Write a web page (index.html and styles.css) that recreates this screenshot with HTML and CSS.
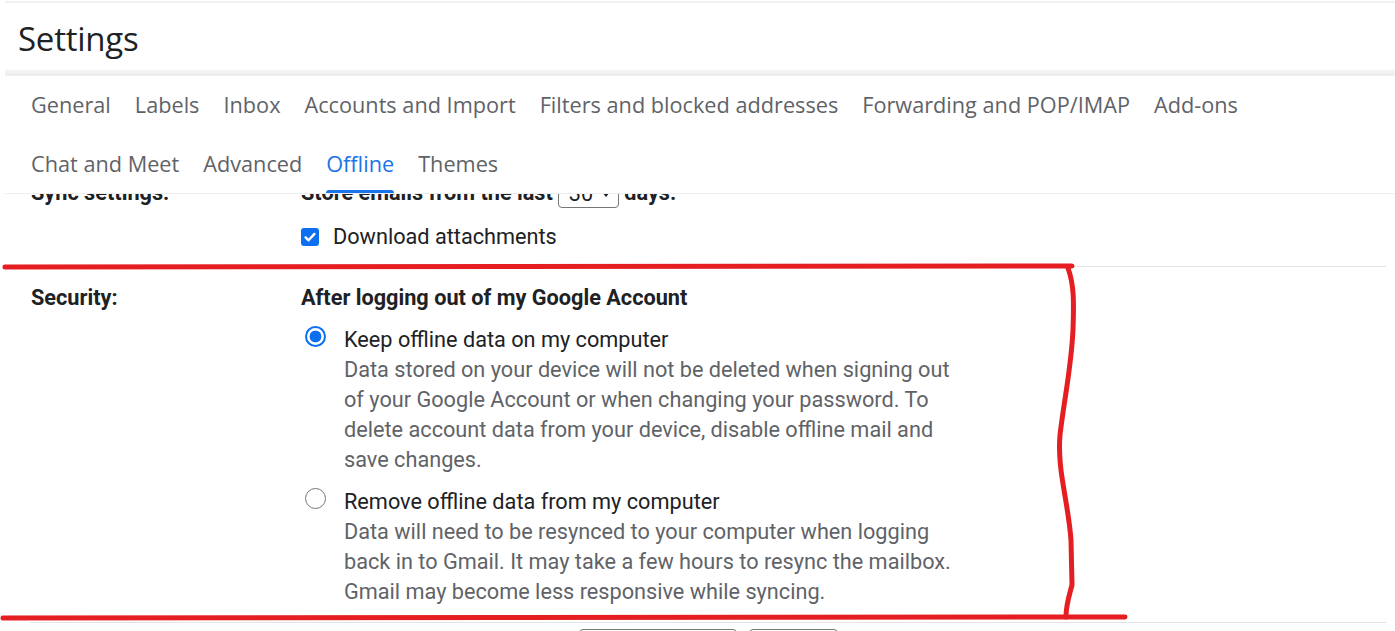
FILE: index.html
```html
<!DOCTYPE html>
<html lang="en">
<head>
<meta charset="utf-8">
<title>Settings - Offline</title>
<link rel="stylesheet" href="styles.css">
</head>
<body>
<div class="page">
  <header class="header">
    <h1 class="title">Settings</h1>
  </header>
  <nav class="tabs">
    <a class="tab">General</a>
    <a class="tab">Labels</a>
    <a class="tab">Inbox</a>
    <a class="tab">Accounts and Import</a>
    <a class="tab">Filters and blocked addresses</a>
    <a class="tab">Forwarding and POP/IMAP</a>
    <a class="tab">Add-ons</a>
    <a class="tab">Chat and Meet</a>
    <a class="tab">Advanced</a>
    <a class="tab active">Offline</a>
    <a class="tab">Themes</a>
  </nav>
  <div class="viewport">
    <div class="scroll">
      <div class="row">
        <div class="label">Sync settings:</div>
        <div class="value">
          <div class="line strong sync">
            Store emails from the last
            <span class="select">30<svg class="caret" width="8" height="5" viewBox="0 0 8 5"><path d="M0 0h8L4 5z" fill="#202124"/></svg></span>
            days.
          </div>
          <label class="check">
            <span class="box"><svg width="14" height="14" viewBox="0 0 14 14"><path d="M2.6 7.3l3 3 5.8-6.4" fill="none" stroke="#fff" stroke-width="2.4" stroke-linecap="round" stroke-linejoin="round"/></svg></span>
            Download attachments
          </label>
        </div>
      </div>
      <div class="row">
        <div class="label">Security:</div>
        <div class="value">
          <div class="line strong">After logging out of my Google Account</div>
          <div class="option">
            <span class="radio checked"></span>
            <div class="opt-text">
              <div class="opt-title">Keep offline data on my computer</div>
              <div class="opt-desc">Data stored on your device will not be deleted when signing out of your Google Account or when changing your password. To delete account data from your device, disable offline mail and save changes.</div>
            </div>
          </div>
          <div class="option">
            <span class="radio"></span>
            <div class="opt-text">
              <div class="opt-title">Remove offline data from my computer</div>
              <div class="opt-desc">Data will need to be resynced to your computer when logging back in to Gmail. It may take a few hours to resync the mailbox. Gmail may become less responsive while syncing.</div>
            </div>
          </div>
        </div>
      </div>
      <div class="actions">
        <button class="btn save">Save Changes</button>
        <button class="btn cancel">Cancel</button>
      </div>
    </div>
  </div>
  <svg class="annot" width="1395" height="631" viewBox="0 0 1395 631">
    <g fill="none" stroke="#e51e22" stroke-width="5" stroke-linecap="round" stroke-linejoin="round">
      <path d="M5 267 L1072 266"/>
      <path d="M1068 268 C1074 285 1074 300 1073 330 C1071 370 1064 400 1060 435 C1057 470 1068 500 1071 540 L1072 585 C1068 600 1066 605 1066 617"/>
      <path d="M3 618 L1125 617"/>
    </g>
  </svg>
</div>
</body>
</html>
```

FILE: styles.css
```css
html, body {
  margin: 0;
  padding: 0;
  overflow: hidden;
  background: #fff;
  width: 1395px;
  height: 631px;
}

.page {
  position: relative;
  margin: 1px 0 0 5px;
  border-top: 2px solid #eef0f2;
  font-family: Roboto, "Liberation Sans", sans-serif;
  color: #202124;
}

.header {
  height: 70px;
  display: flex;
  align-items: center;
  padding-left: 13px;
  border-bottom: 3px solid #eceef0;
  box-shadow: inset 0 -3px 0 #f3f4f5;
}

.title {
  margin: 0;
  font-family: "Open Sans", Roboto, sans-serif;
  font-weight: 400;
  font-size: 33px;
  color: #202124;
  letter-spacing: -0.25px;
}

.tabs {
  display: flex;
  flex-wrap: wrap;
  column-gap: 24px;
  row-gap: 1px;
  padding-left: 26px;
  border-bottom: 1px solid #eceef0;
}

.tab {
  position: relative;
  height: 58px;
  display: flex;
  align-items: center;
  padding-bottom: 1px;
  box-sizing: border-box;
  font-family: "Open Sans", Roboto, sans-serif;
  font-size: 21.7px;
  color: #5f6368;
  cursor: pointer;
}

.tab.active {
  color: #1a73e8;
}

.tab.active::after {
  content: "";
  position: absolute;
  left: 0;
  right: 0;
  bottom: 0;
  height: 3px;
  background: #1a73e8;
  border-radius: 3px 3px 0 0;
}

.viewport {
  height: 437px;
  overflow: hidden;
}

.scroll {
  margin-top: -31px;
  margin-left: 25px;
  width: 1356px;
  font-size: 21.7px;
  line-height: 30px;
}

.row {
  display: grid;
  grid-template-columns: 271px 1fr;
  border-bottom: 1px solid #e2e3e5;
  padding: 15px 0 14px;
}

.row + .row {
  padding: 16px 0 15px;
}

.label {
  padding-left: 1px;
  font-weight: 700;
  color: #202124;
}

.line {
  height: 30px;
}

.strong {
  font-weight: 700;
}

.sync {
  display: flex;
  align-items: center;
  gap: 5px;
}

.select {
  display: inline-flex;
  align-items: center;
  gap: 9px;
  height: 27px;
  box-sizing: border-box;
  padding: 0 8px 0 10px;
  border: 1px solid #767676;
  border-radius: 4px;
  font-weight: 400;
  margin-top: 2px;
}

.check {
  display: flex;
  align-items: center;
  margin-top: 14px;
  height: 30px;
}

.box {
  width: 18px;
  height: 18px;
  border-radius: 3px;
  background: #0b6ff0;
  display: flex;
  align-items: center;
  justify-content: center;
  margin-right: 14px;
}

.option {
  display: grid;
  grid-template-columns: 43px 1fr;
  margin-top: 12px;
}

.radio {
  width: 21px;
  height: 21px;
  box-sizing: border-box;
  margin: 1px 0 0 4px;
  border-radius: 50%;
  border: 1.5px solid #767676;
  background: #fff;
}

.radio.checked {
  border: 2px solid #0b6ff0;
  background: radial-gradient(circle, #0b6ff0 0 5.6px, #fff 6.2px);
}

.opt-title {
  color: #202124;
}

.opt-desc {
  width: 616px;
  color: #5f6368;
}

.actions {
  display: flex;
  justify-content: center;
  gap: 12px;
  margin-top: 6px;
}

.btn {
  height: 36px;
  border: 1px solid #747775;
  border-radius: 4px;
  background: #fff;
  font-family: Roboto, "Liberation Sans", sans-serif;
  font-size: 19px;
  color: #202124;
}

.btn.save { width: 158px; }
.btn.cancel { width: 89px; }

.annot {
  position: absolute;
  left: -5px;
  top: -3px;
  pointer-events: none;
}
```
